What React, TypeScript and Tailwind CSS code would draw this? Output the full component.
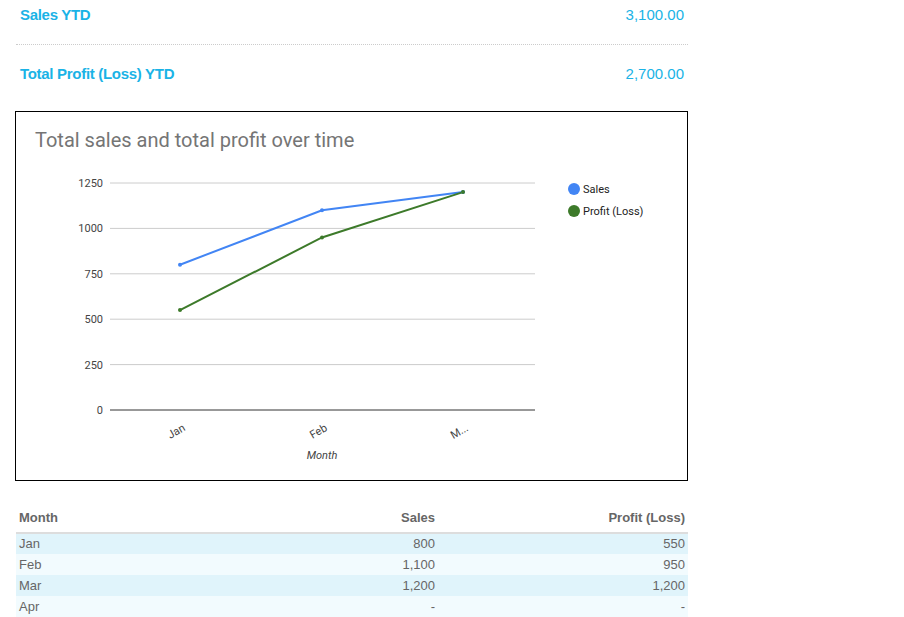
const rows = [
  { month: "Jan", sales: "800", profit: "550" },
  { month: "Feb", sales: "1,100", profit: "950" },
  { month: "Mar", sales: "1,200", profit: "1,200" },
  { month: "Apr", sales: "-", profit: "-" },
]

// chart coords are relative to the inner box (origin at page x=16, y=112)
const y0 = 298
const scale = 227 / 1250
const yOf = (v: number) => y0 - v * scale
const xs = [164, 306, 447]

function Chart() {
  const sales = [800, 1100, 1200]
  const profit = [550, 950, 1200]
  const pts = (d: number[]) => d.map((v, i) => `${xs[i]},${yOf(v)}`).join(" ")
  return (
    <svg width="672" height="367" style={{ fontFamily: "Roboto, Arial, sans-serif" }}>
      <text x="19" y="35" fontSize="20" fill="#757575">Total sales and total profit over time</text>
      {[0, 250, 500, 750, 1000, 1250].map((v) => (
        <g key={v}>
          <line x1="94" x2="519" y1={yOf(v)} y2={yOf(v)} stroke={v === 0 ? "#333" : "#ccc"} strokeWidth="1" />
          <text x="87" y={yOf(v) + 4} fontSize="11" fill="#444" textAnchor="end">{v}</text>
        </g>
      ))}
      <polyline points={pts(sales)} fill="none" stroke="#4285f4" strokeWidth="2" />
      <polyline points={pts(profit)} fill="none" stroke="#3d7a2a" strokeWidth="2" />
      {sales.map((v, i) => <circle key={"s" + i} cx={xs[i]} cy={yOf(v)} r="2" fill="#4285f4" />)}
      {profit.map((v, i) => <circle key={"p" + i} cx={xs[i]} cy={yOf(v)} r="2" fill="#3d7a2a" />)}
      {["Jan", "Feb", "M..."].map((l, i) => (
        <text key={l} x={xs[i] + 6} y="318" fontSize="11" fill="#444" textAnchor="end" transform={`rotate(-30 ${xs[i] + 6} 318)`}>{l}</text>
      ))}
      <text x="306" y="347" fontSize="11" fill="#444" fontStyle="italic" textAnchor="middle">Month</text>
      <circle cx="558" cy="77" r="6" fill="#4285f4" />
      <text x="567" y="81" fontSize="11" fill="#222">Sales</text>
      <circle cx="558" cy="99" r="6" fill="#3d7a2a" />
      <text x="567" y="103" fontSize="11" fill="#222">Profit (Loss)</text>
    </svg>
  )
}

export default function App() {
  return (
    <div className="w-[904px] h-[617px] bg-white overflow-hidden" style={{ fontFamily: "'Liberation Sans', Arial, sans-serif" }}>
      <div className="w-[672px] ml-[16px]">
        <div className="flex justify-between items-center h-[30px] px-[4px] text-[#1ab3e6]">
          <span className="font-bold text-[15px] tracking-[-0.3px]">Sales YTD</span>
          <span className="text-[15px]">3,100.00</span>
        </div>
        <div className="mt-[14px] border-t border-dotted border-[#ccc]" />
        <div className="flex justify-between items-center h-[30px] mt-[14px] px-[4px] text-[#1ab3e6]">
          <span className="font-bold text-[15px] tracking-[-0.3px]">Total Profit (Loss) YTD</span>
          <span className="text-[15px]">2,700.00</span>
        </div>
        <div className="mt-[22px] -ml-[1px] w-[673px] h-[370px] border border-black">
          <Chart />
        </div>
        <table className="w-full mt-[22px] text-[13px] text-[#666] border-collapse">
          <thead>
            <tr className="h-[30px] border-b-2 border-[#ddd]">
              <th className="text-left font-bold px-[3px]">Month</th>
              <th className="text-right font-bold px-[3px] w-[250px]">Sales</th>
              <th className="text-right font-bold px-[3px] w-[250px]">Profit (Loss)</th>
            </tr>
          </thead>
          <tbody>
            {rows.map((r, i) => (
              <tr key={r.month} className={`h-[21px] ${i % 2 === 0 ? "bg-[#e0f4fb]" : "bg-[#f2fbfe]"}`}>
                <td className="px-[3px]">{r.month}</td>
                <td className="px-[3px] text-right">{r.sales}</td>
                <td className="px-[3px] text-right">{r.profit}</td>
              </tr>
            ))}
          </tbody>
        </table>
      </div>
    </div>
  )
}
